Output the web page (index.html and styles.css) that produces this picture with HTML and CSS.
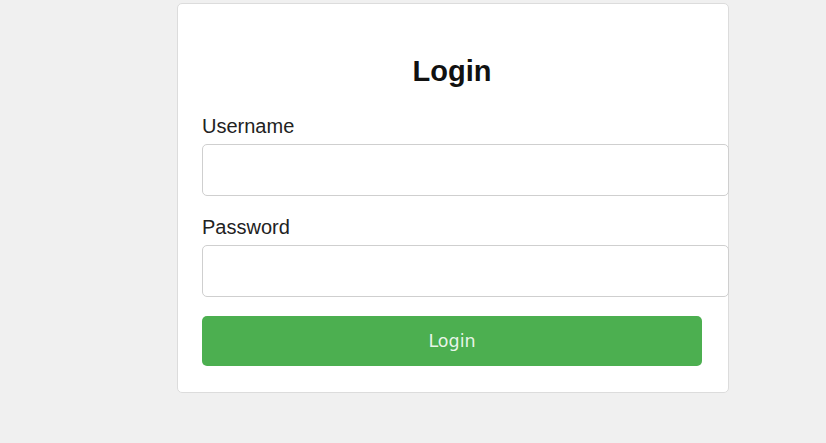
FILE: index.html
```html
<!DOCTYPE html>
<html>
<head>
<meta charset="utf-8">
<title>Login</title>
<link rel="stylesheet" href="styles.css">
</head>
<body>
<div class="card">
  <h2 class="title">Login</h2>
  <form class="form">
    <label class="label" for="username">Username</label>
    <input class="input" id="username" type="text">
    <label class="label label-second" for="password">Password</label>
    <input class="input" id="password" type="password">
    <button class="button" type="button">Login</button>
  </form>
</div>
</body>
</html>
```
FILE: styles.css
```css
html, body {
  margin: 0;
  background: #f0f0f0;
}
body {
  padding: 3px 0 0 177px;
  font-family: "Liberation Sans", Arial, sans-serif;
  color: #222;
}
.card {
  width: 500px;
  background: #fff;
  border: 1px solid #dcdcdc;
  border-radius: 5px;
  padding: 25px 26px 26px 24px;
}
.title {
  margin: 24px 0 25px;
  font-size: 29px;
  line-height: 36px;
  font-weight: bold;
  text-align: center;
  color: #111;
}
.form {
  display: flex;
  flex-direction: column;
  align-items: flex-start;
}
.label {
  font-size: 20px;
  line-height: 24px;
  margin-bottom: 6px;
  color: #222;
}
.label-second {
  margin-top: 19px;
}
.input {
  width: 500px;
  height: 26px;
  padding: 12px 13px 12px 12px;
  border: 1px solid #cfcfcf;
  border-radius: 5px;
  margin: 0;
  font-size: 18px;
  background: #fff;
}
.button {
  margin-top: 19px;
  width: 500px;
  height: 50px;
  border: none;
  border-radius: 5px;
  background: #4caf50;
  color: rgba(255, 255, 255, 0.88);
  font-family: "DejaVu Sans", sans-serif;
  font-size: 17.5px;
  padding: 0;
}
```
